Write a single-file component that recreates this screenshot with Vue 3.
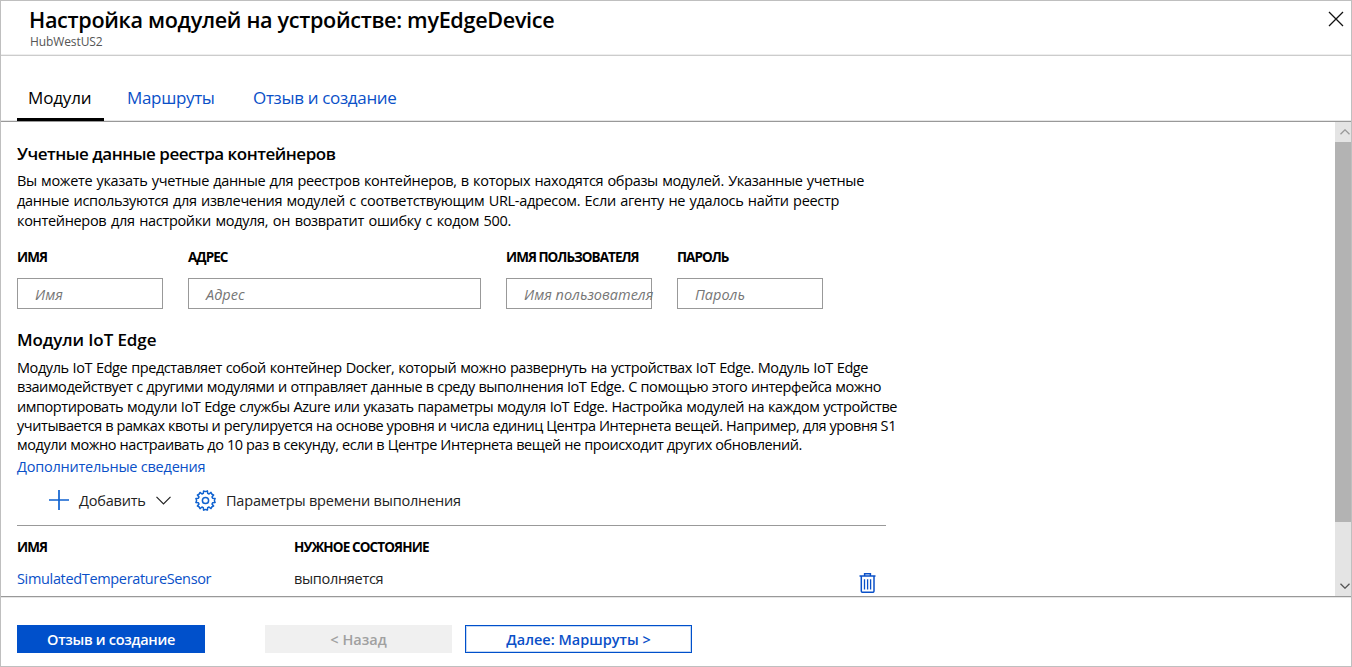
<script setup>
const registryLines = [
  'Вы можете указать учетные данные для реестров контейнеров, в которых находятся образы модулей. Указанные учетные',
  'данные используются для извлечения модулей с соответствующим URL-адресом. Если агенту не удалось найти реестр',
  'контейнеров для настройки модуля, он возвратит ошибку с кодом 500.',
]
const moduleLines = [
  'Модуль IoT Edge представляет собой контейнер Docker, который можно развернуть на устройствах IoT Edge. Модуль IoT Edge',
  'взаимодействует с другими модулями и отправляет данные в среду выполнения IoT Edge. С помощью этого интерфейса можно',
  'импортировать модули IoT Edge службы Azure или указать параметры модуля IoT Edge. Настройка модулей на каждом устройстве',
  'учитывается в рамках квоты и регулируется на основе уровня и числа единиц Центра Интернета вещей. Например, для уровня S1',
  'модули можно настраивать до 10 раз в секунду, если в Центре Интернета вещей не происходит других обновлений.',
]
const fields = [
  { label: 'ИМЯ', hint: 'Имя', kind: 'short' },
  { label: 'АДРЕС', hint: 'Адрес', kind: 'wide' },
  { label: 'ИМЯ ПОЛЬЗОВАТЕЛЯ', hint: 'Имя пользователя', kind: 'short' },
  { label: 'ПАРОЛЬ', hint: 'Пароль', kind: 'short' },
]
</script>

<template>
  <div class="blade">
    <header class="head">
      <div>
        <h1>Настройка модулей на устройстве: myEdgeDevice</h1>
        <p class="sub">HubWestUS2</p>
      </div>
      <svg class="close" width="16" height="16" viewBox="0 0 16 16"><path d="M1 1L15 15M15 1L1 15" /></svg>
    </header>

    <nav class="tabs">
      <a class="tab active">Модули</a>
      <a class="tab">Маршруты</a>
      <a class="tab">Отзыв и создание</a>
    </nav>

    <div class="body">
      <main class="content">
        <h2 class="h-reg">Учетные данные реестра контейнеров</h2>
        <div class="para reg">
          <div v-for="(l, i) in registryLines" :key="i" :class="['line', 'r' + i]">{{ l }}</div>
        </div>
        <div class="fields">
          <div v-for="f in fields" :key="f.label" :class="['field', f.kind]">
            <div class="label">{{ f.label }}</div>
            <div class="input">{{ f.hint }}</div>
          </div>
        </div>
        <h2 class="h-mod">Модули IoT Edge</h2>
        <div class="para mod">
          <div v-for="(l, i) in moduleLines" :key="i" :class="['line', 'm' + i]">{{ l }}</div>
        </div>
        <a class="more">Дополнительные сведения</a>
        <div class="toolbar">
          <svg class="plus" width="20" height="20" viewBox="0 0 20 20"><path d="M10 0V20M0 10H20" /></svg>
          <span class="add">Добавить</span>
          <svg class="chev" width="15" height="9" viewBox="0 0 15 9"><path d="M.5 .8L7.5 7.8L14.5 .8" /></svg>
          <svg class="gear" width="21" height="21" viewBox="0 0 21 21">
            <path d="M8.3 3.4L8.6 .9Q10.5 2.2 12.4 .9L12.7 3.4L14 4L16 2.4Q16.4 4.6 18.6 5L17 7L17.6 8.3L20.1 8.6Q18.8 10.5 20.1 12.4L17.6 12.7L17 14L18.6 16Q16.4 16.4 16 18.6L14 17L12.7 17.6L12.4 20.1Q10.5 18.8 8.6 20.1L8.3 17.6L7 17L5 18.6Q4.6 16.4 2.4 16L4 14L3.4 12.7L.9 12.4Q2.2 10.5 .9 8.6L3.4 8.3L4 7L2.4 5Q4.6 4.6 5 2.4L7 4Z" />
            <circle cx="10.5" cy="10.5" r="3.1" />
          </svg>
          <span class="runtime">Параметры времени выполнения</span>
        </div>
        <div class="table">
          <div class="row th"><span class="c1">ИМЯ</span><span>НУЖНОЕ СОСТОЯНИЕ</span></div>
          <div class="row td">
            <span class="c1"><a class="sensor">SimulatedTemperatureSensor</a></span>
            <span class="running">выполняется</span>
            <svg class="trash" width="17" height="20" viewBox="0 0 17 20">
              <path d="M.5 3H16.5M5.6 2.5V.7H11.4V2.5M2.3 3.5V18Q2.3 19.3 3.5 19.3H13.8Q15 19.3 15 18V3.5" />
              <path class="bars" d="M5.5 6.2V16.5M8.6 6.2V16.5M11.6 6.2V16.5" />
            </svg>
          </div>
        </div>
      </main>
      <aside class="scroll">
        <svg class="arrow up" width="10" height="6" viewBox="0 0 10 6"><path d="M.5 5.3L5 .8L9.5 5.3" /></svg>
        <div class="thumb"></div>
        <svg class="arrow down" width="10" height="6" viewBox="0 0 10 6"><path d="M.5 .7L5 5.2L9.5 .7" /></svg>
      </aside>
    </div>

    <footer class="foot">
      <div class="btn primary">Отзыв и создание</div>
      <div class="btn disabled">&lt; Назад</div>
      <div class="btn outline">Далее: Маршруты &gt;</div>
    </footer>
  </div>
</template>

<style>
body { margin: 0; background: #fff; }
</style>

<style scoped>
.blade {
  box-sizing: border-box; width: 1352px; height: 667px; border: 1px solid #bfbfbf;
  font-family: "Open Sans", "Noto Sans", sans-serif; color: #000; background: #fff;
  display: flex; flex-direction: column; overflow: hidden; white-space: nowrap;
}
h1, h2, p { margin: 0; }
.head {
  box-sizing: border-box; height: 55px; border-bottom: 1px solid #ccc; box-shadow: inset 0 -1px #eee;
  padding: 5px 7px 0 28px; display: flex; justify-content: space-between;
}
h1 { font-size: 21.6px; line-height: 28px; font-weight: 600; letter-spacing: -0.32px; }
.sub { font-size: 12px; line-height: 16px; color: #555; letter-spacing: -0.1px; padding-left: 1px; }
.close { margin-top: 5px; fill: none; stroke: #111; stroke-width: 1.3; }
.tabs {
  box-sizing: border-box; height: 66px; border-bottom: 1px solid #999; box-shadow: inset 0 -1px #e6e6e6;
  padding-left: 16px; display: flex; align-items: flex-end;
}
.tab {
  box-sizing: border-box; height: 40px; line-height: 33px; font-size: 17px; color: #0a50c8;
  border-bottom: 3px solid transparent; letter-spacing: -0.33px;
}
.tab.active { color: #000; border-color: #000; width: 87px; padding-left: 11px; margin-right: 23px; letter-spacing: -0.15px; }
.tab:nth-child(2) { width: 126px; }
.body { height: 474px; display: flex; justify-content: space-between; }
.content { padding-left: 16px; width: 890px; overflow: hidden; }
h2 { font-size: 17px; font-weight: 600; line-height: 24px; }
.h-reg { padding-top: 20px; letter-spacing: -0.48px; }
.para { font-size: 14.5px; }
.reg { line-height: 20px; margin-top: 5px; }
.mod { line-height: 19.35px; margin-top: 6px; }
.line { text-align-last: justify; letter-spacing: -0.32px; white-space: nowrap; }
.mod .line { letter-spacing: -0.43px; }
.r0 { width: 847px; } .r1 { width: 822px; } .r2 { width: 494px; }
.m0 { width: 851px; } .m1 { width: 864px; } .m2 { width: 880px; } .m3 { width: 879px; } .m4 { width: 785px; }
.fields { display: flex; gap: 25px; margin-top: 17px; }
.field.short { width: 146px; } .field.wide { width: 293px; }
.label { font-size: 13.5px; font-weight: 700; line-height: 18px; letter-spacing: -0.97px; }
.input {
  box-sizing: border-box; height: 31px; margin-top: 12px; border: 1px solid #999; padding-left: 17px;
  font-size: 14.5px; line-height: 31px; font-style: italic; color: #767676;
}
.h-mod { margin-top: 19px; letter-spacing: -0.1px; }
.more { display: block; font-size: 14.5px; line-height: 22px; color: #0a50c8; margin-top: 1px; letter-spacing: -0.22px; }
.toolbar {
  box-sizing: border-box; width: 869px; height: 48px; border-bottom: 1px solid #999; padding: 0 0 2px 32px;
  display: flex; align-items: center; font-size: 14.5px; color: #222; letter-spacing: -0.2px;
}
.plus { fill: none; stroke: #0f62d0; stroke-width: 1.7; }
.add { margin-left: 10px; width: 77px; }
.chev { fill: none; stroke: #222; stroke-width: 1.2; }
.gear { margin-left: 24px; fill: none; stroke: #0f62d0; stroke-width: 1.5; stroke-linejoin: round; }
.runtime { margin-left: 10px; }
.row { display: flex; }
.c1 { width: 277px; }
.th { font-size: 13.5px; font-weight: 700; line-height: 18px; letter-spacing: -0.88px; margin-top: 12px; }
.td { font-size: 14.5px; line-height: 20px; margin-top: 13px; letter-spacing: -0.3px; color: #222; }
.sensor { color: #0a50c8; letter-spacing: -0.34px; }
.running { width: 565px; }
.trash { margin-top: 4px; fill: none; stroke: #0a50c8; stroke-width: 1.5; }
.bars { stroke-width: 1.3; }
.scroll { width: 16px; background: #e4e4e4; display: flex; flex-direction: column; align-items: center; }
.thumb { width: 16px; height: 380px; background: #b3b3b3; margin-top: 7px; }
.arrow { fill: none; stroke-width: 1.3; margin-left: 3px; }
.up { stroke: #999; margin-top: 7px; }
.down { stroke: #555; margin-top: 61px; }
.foot { border-top: 1px solid #999; box-shadow: inset 0 1px #e6e6e6; flex: 1; padding: 28px 0 0 16px; display: flex; }
.btn { box-sizing: border-box; height: 28px; line-height: 29px; text-align: center; font-size: 14.5px; font-weight: 600; }
.primary { width: 188px; background: #0050cb; color: #fff; letter-spacing: -0.3px; }
.disabled { width: 187px; background: #f0f0f0; color: #a0a0a0; margin-left: 60px; }
.outline { width: 227px; margin-left: 13px; border: 1px solid #0050cb; box-shadow: inset 0 0 0 1px #c4d8f4; color: #0a50c8; line-height: 27px; }
</style>
